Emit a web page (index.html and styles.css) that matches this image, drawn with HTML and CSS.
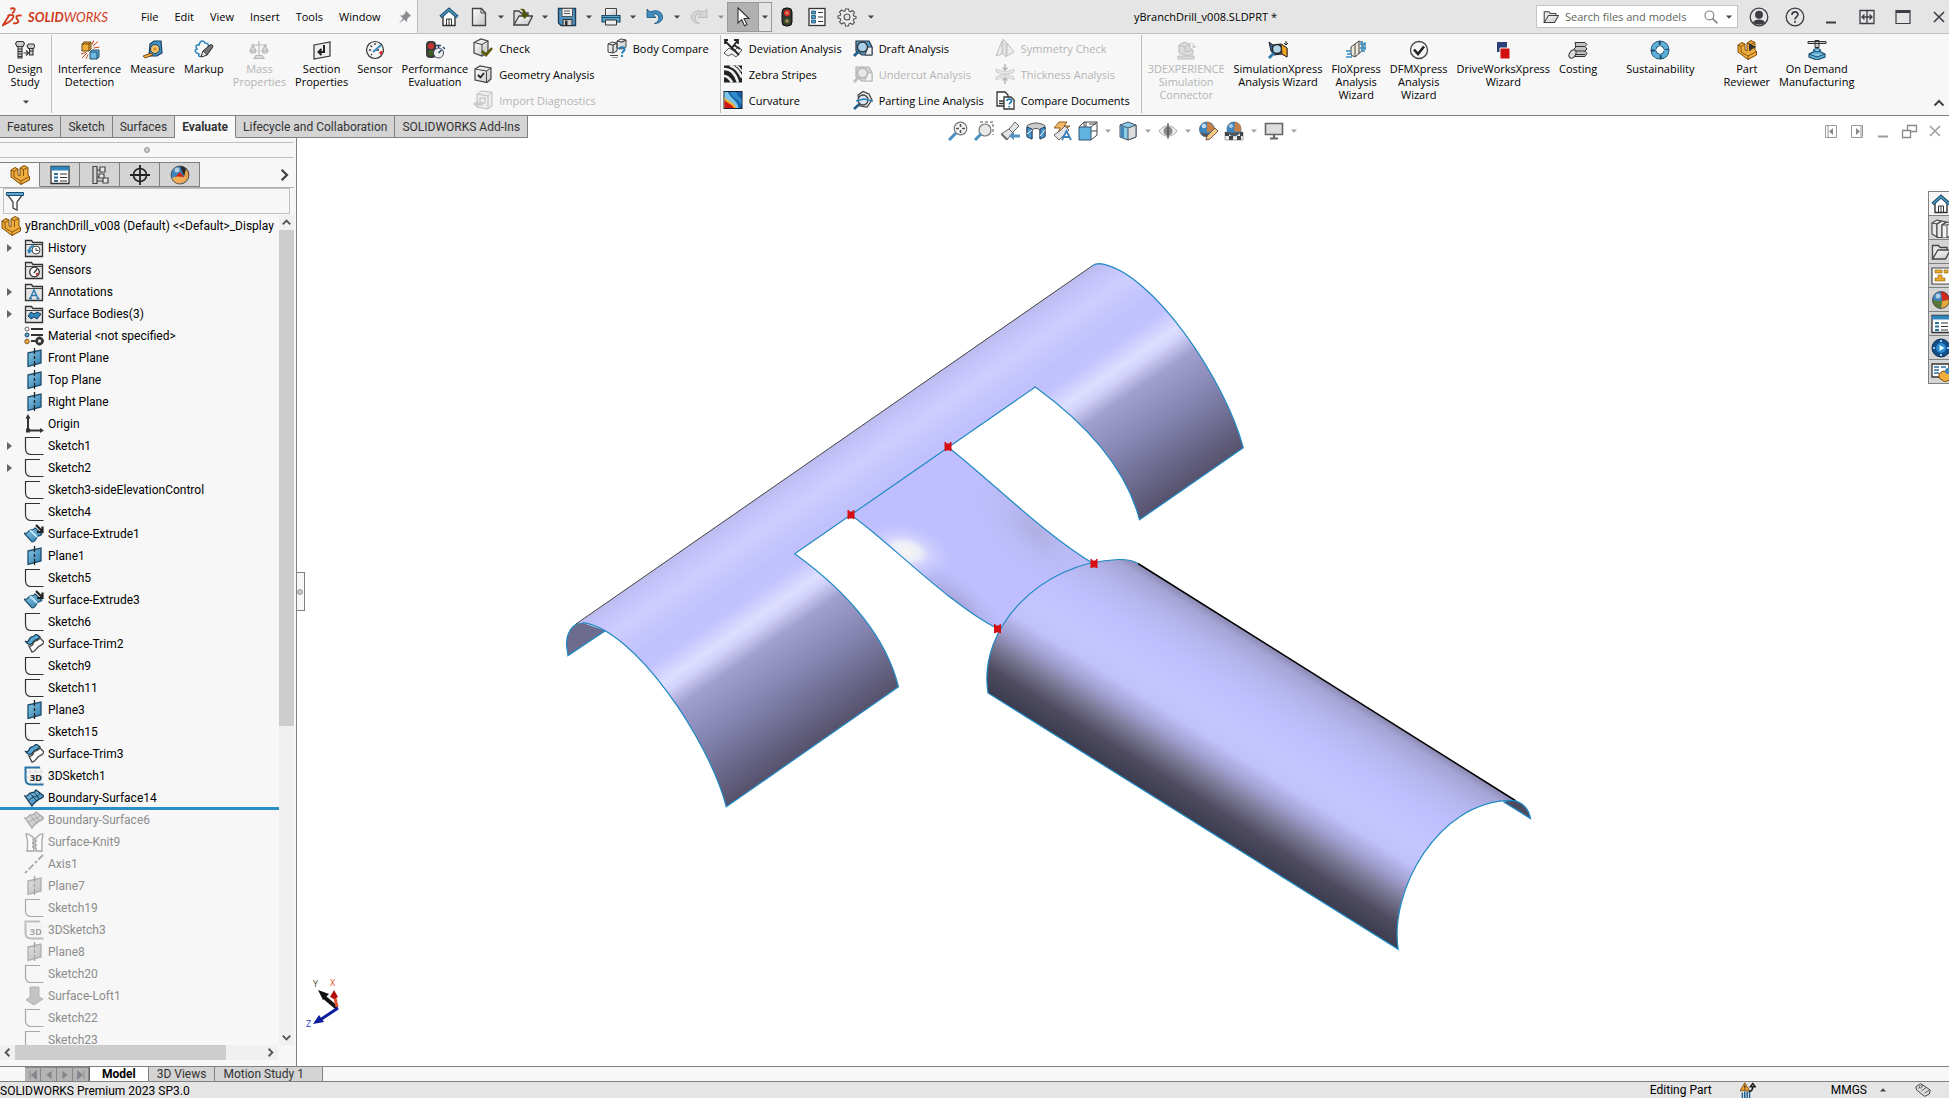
FILE: index.html
```html
<!DOCTYPE html>
<html lang="en">
  <head>
    <meta charset="UTF-8" />
    <meta name="viewport" content="width=device-width, initial-scale=1.0" />
    <title>yBranchDrill_v008.SLDPRT</title>
    <link rel="stylesheet" href="styles.css">
  </head>

  <body>
    <!-- icon sprite -->
    <svg class="sprite" aria-hidden="true">
      <defs>
        <linearGradient id="g-blue" x1="0" y1="0" x2="1" y2="1"><stop offset="0" stop-color="#8cc8e8"/><stop offset="1" stop-color="#2b7cab"/></linearGradient>
        <linearGradient id="g-grey" x1="0" y1="0" x2="1" y2="1"><stop offset="0" stop-color="#fff"/><stop offset="1" stop-color="#c4c4c4"/></linearGradient>
      </defs>
      <symbol id="caret" viewBox="0 0 8 8"><path d="M1 2.500h6L4 5.800z" fill="#444"/></symbol>
      <symbol id="pin" viewBox="0 0 20 20"><path d="M11 2l7 7-2.500.5-3 3.500.2 3.500L9 13 2.500 18 7.500 11.500 3.500 8l3.500.2 3.500-3.200z" fill="#8a8d91"/></symbol>
      <symbol id="home" viewBox="0 0 20 20"><path d="M4 9v9.500h12V9l-6-5.500z" fill="#fff" stroke="#333" stroke-width="1.400"/><path d="M7.500 18v-6h5v6M10 12v6" fill="none" stroke="#333"/><path d="M1.500 10L10 2.500 18.500 10" fill="none" stroke="#1d4e6e" stroke-width="3.400"/><path d="M2 9.800L10 2.800l8 7" fill="none" stroke="#4d9dc8" stroke-width="1.400"/></symbol>
      <symbol id="new" viewBox="0 0 20 20"><path d="M3.500 1.500h9l4 4.500v12.500h-13z" fill="url(#g-grey)" stroke="#444" stroke-width="1.300"/><path d="M12 1.500V6h4.500" fill="none" stroke="#444"/></symbol>
      <symbol id="open" viewBox="0 0 20 20"><path d="M1 18V4h5l2 2h7v3" fill="#ddd" stroke="#444" stroke-width="1.300"/><path d="M1 18L6 9h13.500L15 18z" fill="url(#g-grey)" stroke="#444" stroke-width="1.300"/><path d="M7 2c4-1 6 1 6 5h2.500L11.500 12 8 7h2.500c0-2-1-4-3.500-5z" fill="#505400"/></symbol>
      <symbol id="folder" viewBox="0 0 20 20"><path d="M1.500 17V3.500h6l1.500 2h7V8" fill="#e8e8e8" stroke="#444" stroke-width="1.300"/><path d="M1.500 17L7 8h12.500L14.500 17z" fill="url(#g-grey)" stroke="#444" stroke-width="1.300"/></symbol>
      <symbol id="save" viewBox="0 0 20 20"><path d="M1.500 1.500h17v17H4l-2.500-2.500z" fill="#4d93c0" stroke="#1d3f5c" stroke-width="1.400"/><path d="M5 1.500h10.500v8H5z" fill="#eee" stroke="#555"/><path d="M7 4h6M7 6.500h6" stroke="#555"/><path d="M6 12.500h9v6H6z" fill="#ccc" stroke="#333"/><path d="M8 13.500h2.500V18H8z" fill="#333"/></symbol>
      <symbol id="print" viewBox="0 0 20 20"><path d="M4.500 9V1.500h11V9z" fill="url(#g-grey)" stroke="#444"/><path d="M1 8.500h18v6.500H1z" fill="#5ba5cc" stroke="#1f4f70" stroke-width="1.200"/><path d="M1 10.500h18" stroke="#1f4f70"/><path d="M4.500 13h11v5h-11z" fill="#eee" stroke="#333"/></symbol>
      <symbol id="undo" viewBox="0 0 20 20"><path d="M2 2v8.500h9L7.800 7.500c3-1.500 6 .5 6 3.500 0 2.500-1.500 4.500-4.300 5.500C15 16.500 18 13 17.500 9.500 17 4.500 11 2 5 5z" fill="#3f8fc0" stroke="#1d4e72" stroke-width=".8"/></symbol>
      <symbol id="redo" viewBox="0 0 20 20"><path d="M18 2v8.500H9l3.200-3c-3-1.500-6 .5-6 3.500 0 2.500 1.500 4.500 4.300 5.500C5 16.500 2 13 2.500 9.500 3 4.500 9 2 15 5z" fill="#d5d5d5" stroke="#b4b4b4" stroke-width=".8"/></symbol>
      <symbol id="cursor" viewBox="0 0 20 20"><path d="M5 1l11 10.500h-5l3 6-2.500 1.200-2.800-6L5 16z" fill="#fff" stroke="#333" stroke-width="1.100"/></symbol>
      <symbol id="traffic" viewBox="0 0 20 20"><rect x="5" y="1" width="10" height="18" rx="4" fill="#333" stroke="#111"/><circle cx="10" cy="6" r="3.200" fill="#c92a1c"/><circle cx="10" cy="14" r="3.200" fill="#39501f"/><path d="M10 4v4M8 6h4M10 12v4M8 14h4" stroke="#f3b0a0" stroke-width=".7"/></symbol>
      <symbol id="options" viewBox="0 0 20 20"><rect x="2" y="1.500" width="16" height="17" fill="#fff" stroke="#333" stroke-width="1.300"/><path d="M4.500 4h4v3h-4zM4.500 8.500h4v3h-4zM4.500 13h4v3h-4z" fill="#4a9cc8" stroke="#1d4e6e" stroke-width=".8"/><path d="M11 5.500h5M11 10h5M11 14.500h5" stroke="#333" stroke-width="1.200"/></symbol>
      <symbol id="gear" viewBox="0 0 20 20"><path d="M8.500 2h3l.5 2.200 1.500.6 2-1.300 2 2-1.300 2 .6 1.500 2.200.5v2l-2.200.5-.6 1.500 1.300 2-2 2-2-1.300-1.500.6-.5 2.200h-3L8 16.300l-1.500-.6-2 1.300-2-2 1.300-2-.6-1.500L1 11V9l2.200-.5.6-1.500-1.300-2 2-2 2 1.300L8 4.200z" fill="#eee" stroke="#555" stroke-width="1.100"/><circle cx="10" cy="10" r="3" fill="#e5e5e5" stroke="#555" stroke-width="1.100"/></symbol>
      <symbol id="search" viewBox="0 0 20 20"><circle cx="8" cy="8" r="5.500" fill="none" stroke="#888" stroke-width="1.500"/><path d="M12 12l6 6" stroke="#888" stroke-width="2.200"/></symbol>
      <symbol id="user" viewBox="0 0 20 20"><circle cx="10" cy="10" r="8.800" fill="none" stroke="#3d3d46" stroke-width="1.300"/><circle cx="10" cy="7.800" r="4" fill="#3d3d46"/><path d="M4 15.500c1-4 11-4 12 0-2.500 3-9.500 3-12 0z" fill="#3d3d46"/></symbol>
      <symbol id="help" viewBox="0 0 20 20"><circle cx="10" cy="10" r="8.800" fill="none" stroke="#3d3d46" stroke-width="1.300"/><path d="M7 8c0-4 6-4 6-.5 0 2-3 2.300-3 5M10 14v1.800" fill="none" stroke="#3d3d46" stroke-width="1.700"/></symbol>
      <symbol id="min" viewBox="0 0 20 20"><path d="M5 15.500h10" stroke="#3d3d46" stroke-width="2"/></symbol>
      <symbol id="span" viewBox="0 0 20 20"><path d="M3 3.500h14v13H3zM10 3v14M5 10h10M7.500 7.500L5 10l2.500 2.500M12.500 7.500L15 10l-2.500 2.500" fill="none" stroke="#3d3d46" stroke-width="1.300"/></symbol>
      <symbol id="max" viewBox="0 0 20 20"><path d="M3 3.500h14v13H3z" fill="none" stroke="#3d3d46" stroke-width="1.200"/><path d="M3 4.500h14" stroke="#3d3d46" stroke-width="3"/></symbol>
      <symbol id="close" viewBox="0 0 20 20"><path d="M5 5l10 10M15 5L5 15" stroke="#3d3d46" stroke-width="1.600"/></symbol>
      <symbol id="bolts" viewBox="0 0 20 20"><path d="M.5 3.500L2 1.500h6l1.500 2L8 6.500H2zM3 6.500h4V18H3zM12 6l1.500-2h5L20 6l-1.500 2.500h-5zM14.500 8.500h3.500V15h-3.500z" fill="#ccc" stroke="#333" stroke-width="1.100"/><path d="M3 9h4M3 11.500h4M3 14h4M3 16.500h4M8.500 13h5M11 10.500l2.500 2.500-2.500 2.500M14.500 11h3.500" fill="none" stroke="#333" stroke-width="1.200"/></symbol>
      <symbol id="interference" viewBox="0 0 20 20"><path d="M2 4l2-2h7v7l-2 2H2z" fill="#f0b040" stroke="#6b430a"/><path d="M2 4h7v7M9 4l2-2" fill="none" stroke="#6b430a"/><path d="M10 12l2-2h7v7l-2 2h-7z" fill="#6db8dc" stroke="#1d4e6e"/><path d="M10 12h7v7" fill="none" stroke="#1d4e6e"/><path d="M13 6l5-4.500M13.500 8l6-1M12.500 4.500l1-4M7 13l-5 5M8 14.500L6 19M6 12.500L1 14" stroke="#d2451e"/></symbol>
      <symbol id="measure" viewBox="0 0 20 20"><path d="M7 4l4-3h7l1 12-5 3H6z" fill="#3f93c4" stroke="#1d4060" stroke-width="1.200"/><circle cx="12" cy="9" r="4.500" fill="#f4c168" stroke="#1d4060"/><circle cx="12" cy="9" r="1.600" fill="#d88a20"/><path d="M0 16l8-3 2 2-8 3z" fill="#f0a840" stroke="#553608" stroke-width=".8"/></symbol>
      <symbol id="markup" viewBox="0 0 20 20"><path d="M9 15c-3 2-5 2-4-1-4-1-5-4-2-5-2-3 0-5 2-4 1-5 5-5 6-2 3 0 4 2 3 4" fill="none" stroke="#2e86bd" stroke-width="1.500"/><path d="M7 17l2-6 7-6c2-1 3.500.5 2.500 2.500L13 15z" fill="#777" stroke="#222"/><path d="M7 17l2-6 4 4z" fill="#eee" stroke="#333" stroke-width=".8"/></symbol>
      <symbol id="scale" viewBox="0 0 20 20"><path d="M10 1v15M2 5h16M4 5l-3 6h6zM16 5l-3 6h6zM5 18.500h10l-2-3H7zM1 11c1 3 5 3 6 0M13 11c1 3 5 3 6 0" fill="#aaa" stroke="#444" stroke-width="1.200"/></symbol>
      <symbol id="section" viewBox="0 0 20 20"><path d="M2 5l16-3v14L2 19z" fill="#eee" stroke="#333" stroke-width="1.200"/><path d="M12 5v7H8M9.500 9L6.500 12l3 3" fill="none" stroke="#222" stroke-width="2"/></symbol>
      <symbol id="sensor" viewBox="0 0 20 20"><circle cx="10" cy="10" r="8.500" fill="#f4f4f4" stroke="#333" stroke-width="1.200"/><path d="M10 3v2M4 10h2M5.500 5.500L7 7M6 15l1-1M10 10h4" stroke="#333" stroke-width="1.300"/><path d="M14 12l4-1.500-2 5z" fill="#d22"/><path d="M8 12l8-7" stroke="#3a8fc4" stroke-width="2"/></symbol>
      <symbol id="perf" viewBox="0 0 20 20"><rect x="1" y="1" width="10" height="17" rx="4" fill="#3b3b3b"/><circle cx="6" cy="6" r="3" fill="#c33"/><circle cx="6" cy="13" r="3" fill="#3d5a24"/><circle cx="13.500" cy="13" r="5" fill="#eee" stroke="#446"/><path d="M13.500 13l3-3M13.500 8V5.500M11 5.500h5M18 7l2 2" stroke="#246" stroke-width="1.500"/></symbol>
      <symbol id="check" viewBox="0 0 20 20"><path d="M1 4.500L8 1l7 2v11l-6 4-8-3z" fill="url(#g-grey)" stroke="#444" stroke-width="1.200"/><path d="M1 4.500l8 2 6-3.500M9 6.500V18" fill="none" stroke="#444"/><path d="M9 13l4 4 6-7" fill="none" stroke="#5c5a08" stroke-width="2.600"/></symbol>
      <symbol id="geom" viewBox="0 0 20 20"><path d="M2 5l5-3 11 2v11l-4 3.500L2 16z" fill="url(#g-grey)" stroke="#444" stroke-width="1.200"/><path d="M2 5l11.500 2L18 4M13.500 7v11" fill="none" stroke="#444"/><path d="M5 11l2.500 2.500L11 9" fill="none" stroke="#222" stroke-width="1.800"/></symbol>
      <symbol id="import" viewBox="0 0 20 20"><path d="M4 4l4-3 11 1v14l-4 3-11-2z" fill="#ddd" stroke="#555"/><path d="M4 4l11 2 4-4M15 6v13M7 8h5v5H7z" fill="none" stroke="#555"/><path d="M0 14l5-4v2.500h5v3H5V18z" fill="#777"/></symbol>
      <symbol id="compare" viewBox="0 0 20 20"><path d="M1 6l4-2 5 1v8l-4 2-5-1zM10 3l4-2 5 1v7l-4 2-5-1z" fill="url(#g-grey)" stroke="#444"/><path d="M1 6l5 1 4-2M6 7v8M10 3l5 1 4-2M3 17.500h8M5 20h6" fill="none" stroke="#444" stroke-width="1.200"/><path d="M12.500 11.500c0-3 5-3 5 0 0 2-2.500 2-2.500 4M15 17v2" fill="none" stroke="#257eb5" stroke-width="2"/></symbol>
      <symbol id="deviation" viewBox="0 0 20 20"><path d="M1 15l5-5 5 3 4-4 4 3-6 7-4-3-4 2z" fill="#f2f2f2" stroke="#555"/><path d="M2 3l14 14M8 11L15 2M5 2H2v4M11 2h4v4M17 11l-6-4" fill="none" stroke="#222" stroke-width="1.800"/></symbol>
      <symbol id="zebra" viewBox="0 0 20 20"><rect x="1" y="1.500" width="18" height="17" fill="#222"/><path d="M1 5c8 0 12 6 14 13.500M7 1.500c7 2 9 7 12 12M1 12c4 0 6 3 8 6.500" fill="none" stroke="#eee" stroke-width="2.600"/><path d="M13 1.500c3 1 4 3 6 6" fill="none" stroke="#eee" stroke-width="1.800"/></symbol>
      <symbol id="curvature" viewBox="0 0 20 20"><rect x="1" y="1.500" width="18" height="17" fill="#1a62a8" stroke="#123"/><path d="M1.500 2v16h14C15 11 8 9 5 2z" fill="#7cc6ea"/><path d="M1.500 7v11H13c-1-6-8-6-11.500-11z" fill="#f0b030"/><path d="M1.500 10v8H11c-2-4-6-4-9.500-8z" fill="#d31414"/><path d="M7 2c2 6 8 6 11.500 13V9C16 7 14 5 13 2z" fill="#2f8ccc"/></symbol>
      <symbol id="draft" viewBox="0 0 20 20"><path d="M3 3h13l3 6v8H9L3 13z" fill="#5aa3cf" stroke="#234" stroke-width="1.200"/><path d="M15 9h4v8h-7z" fill="#eee" stroke="#345"/><circle cx="9.500" cy="9" r="5" fill="#bcdcef" fill-opacity=".8" stroke="#333" stroke-width="1.300"/><path d="M6 13l-5 5" stroke="#235f8a" stroke-width="2.800"/></symbol>
      <symbol id="parting" viewBox="0 0 20 20"><path d="M5 5l5-3.500L16 4l3 6-5 7-7-1z" fill="#e2e2e2" stroke="#444" stroke-width="1.200"/><circle cx="10" cy="10" r="5" fill="#d3e6f2" fill-opacity=".8" stroke="#444" stroke-width="1.300"/><path d="M3 11l8-2 9 2" fill="none" stroke="#2b86bd" stroke-width="1.600"/><path d="M6.500 14L1 19" stroke="#235f8a" stroke-width="2.600"/></symbol>
      <symbol id="symmetry" viewBox="0 0 20 20"><path d="M1 18L7 3v13zM8 16V1l3 3v15zM12 5l7 9-7 4z" fill="#ddd" stroke="#555"/></symbol>
      <symbol id="thickness" viewBox="0 0 20 20"><path d="M1 5c6 3 12 3 18 0v3c-6 3-12 3-18 0zM1 13c6-3 12-3 18 0v3c-6-3-12-3-18 0z" fill="#ccc" stroke="#666" stroke-width=".8"/><path d="M10 0v6M7.500 3.500L10 6l2.500-2.500M10 20v-6M7.500 16.500L10 14l2.500 2.500" fill="none" stroke="#333" stroke-width="1.400"/></symbol>
      <symbol id="comparedoc" viewBox="0 0 20 20"><path d="M2 2h8l3 3v11H2z" fill="#fff" stroke="#333" stroke-width="1.300"/><path d="M9 7h7l3 3v9H9z" fill="#fff" stroke="#333" stroke-width="1.300"/><path d="M4 11h5M4 13.500h5" stroke="#333" stroke-width="1.600"/><path d="M12 11c0-2.500 4.500-2.500 4.500 0 0 1.800-2.200 1.800-2.200 3.500M14.300 16v1.500" fill="none" stroke="#257eb5" stroke-width="1.800"/></symbol>
      <symbol id="cloudsim" viewBox="0 0 20 20"><path d="M2 16h16v3H2zM3 5l5-3 6 2v4l3 2v4l-6 2-8-3z" fill="#aaa" stroke="#555"/><path d="M3 5l6 2 5-3M9 7v5l8-2M15 3c2 0 3 2 3 4M16 6l2 2 2-2" fill="none" stroke="#555"/></symbol>
      <symbol id="simx" viewBox="0 0 20 20"><path d="M1 2l4 3 8-1 6 4v9l-5-3-8 1-3-4z" fill="#3b5f96" stroke="#222"/><path d="M13 4l6 4v9l-5-3z" fill="#f2a521" stroke="#432"/><circle cx="9" cy="9" r="4.500" fill="#b4d4e8" stroke="#222" stroke-width="1.300"/><path d="M6 13l-5 5" stroke="#2978ab" stroke-width="2.800"/><path d="M18 1v4M16 3l2 2 2-2" stroke="#222" fill="none"/></symbol>
      <symbol id="flo" viewBox="0 0 20 20"><path d="M5 7l8-6 4 2v7l-8 7-4-2z" fill="#eee8da" stroke="#444"/><path d="M9 4v12M13 2v12" stroke="#444"/><path d="M0 11h5M1 14h5M0 17h6M14 4h6M14 8h6M15 11h4M16 1v11M19 2v8" stroke="#3a8fc4" stroke-width="1.400"/></symbol>
      <symbol id="dfm" viewBox="0 0 20 20"><circle cx="10" cy="10" r="8.500" fill="#f5f5f5" stroke="#444" stroke-width="1.300"/><path d="M5 9.500l4 4.500 6-7.500" fill="none" stroke="#222" stroke-width="2.600"/></symbol>
      <symbol id="driveworks" viewBox="0 0 20 20"><path d="M4 2h10v10H4z" fill="#2b3f78"/><path d="M7 8h10v11H7z" fill="#d20f0f" stroke="#f7f7f7"/></symbol>
      <symbol id="costing" viewBox="0 0 20 20"><path d="M7 2.500h10l2 2-2 2 2 2.500-2 2 2 2.500-2 3H6l-1-3 2-2-1-2.500 2-2z" fill="#c2c2c2" stroke="#333"/><path d="M7 6.500h10M7 11h10M6 14.500h11" stroke="#333"/><ellipse cx="4.500" cy="14" rx="3" ry="4.500" transform="rotate(30 4.500 14)" fill="#ddd" stroke="#333"/></symbol>
      <symbol id="sustain" viewBox="0 0 20 20"><circle cx="10" cy="10" r="6.500" fill="none" stroke="#1d4e6e" stroke-width="6"/><circle cx="10" cy="10" r="6.500" fill="none" stroke="#5fb0d9" stroke-width="4.200" stroke-dasharray="8.200 2"/><path d="M10 5l1.500 3.500L15 10l-3.500 1.500L10 15l-1.500-3.500L5 10l3.500-1.500z" fill="#fff"/></symbol>
      <symbol id="part" viewBox="0 0 20 20"><path d="M1 5l4-2.500L8 4v6l2 1V3l4-2.500L18 2.500v7.500l1.500 1.500V15L11 19.500 1 12z" fill="#f0ac3c" stroke="#7c4c0a"/><path d="M1 5l3 1.500 4-2.500M4 6.500v5.500l7 4 8.500-4.500M11 16v3.500M10 3l3.500 1.500L18 2.500M13.500 4.500V11" fill="none" stroke="#7c4c0a" stroke-width=".9"/></symbol>
      <symbol id="review" viewBox="0 0 20 20"><use href="#part"/><path d="M12 3l7 4-7 4z" fill="#333"/></symbol>
      <symbol id="demand" viewBox="0 0 20 20"><path d="M1 1.500h18v2H1zM8 .5h4v7H8z" fill="#ccc" stroke="#333"/><path d="M10 7v4" stroke="#222" stroke-width="2"/><path d="M2 14l8-4 8 4v3l-8 3-8-3z" fill="#5fb0d9" stroke="#1d4e6e" stroke-width="1.200"/><path d="M2 14l8 3 8-3M6 10l4-2 4 2-4 2z" fill="#85c8e8" stroke="#1d4e6e"/></symbol>

      <!-- heads-up view toolbar -->
      <symbol id="zoomfit" viewBox="0 0 20 20"><circle cx="12.500" cy="7.500" r="6.300" fill="#f4f4f4" stroke="#777" stroke-width="1.200"/><path d="M12.500 3v3M12.500 9v3M8 7.500h3M14 7.500h3" stroke="#555" stroke-width="1.600"/><path d="M8 12l-7 7" stroke="#4c8fc0" stroke-width="3"/></symbol>
      <symbol id="zoomarea" viewBox="0 0 20 20"><path d="M6 1h13v13" fill="none" stroke="#555" stroke-dasharray="3 2"/><circle cx="11" cy="9" r="6" fill="#e8e8e8" stroke="#777" stroke-width="1.200"/><path d="M7 13l-6 6" stroke="#4c8fc0" stroke-width="3"/></symbol>
      <symbol id="prevview" viewBox="0 0 20 20"><path d="M1 13l8-5 6-7 4 4-6 6-6 8z" fill="#e4e4e4" stroke="#666"/><path d="M9 8l4 4" stroke="#666"/><path d="M1.500 13l5.500 5.500" stroke="#666" stroke-width="2"/><path d="M9 15l5-4v2.500h6v3h-6V19z" fill="#5295c4"/></symbol>
      <symbol id="sectionview" viewBox="0 0 20 20"><path d="M1 5c4-4 14-4 18 0v10l-5 3V9c-2-2-6-2-8 0v9l-5-3z" fill="#ccc" stroke="#555"/><path d="M1 6l5 2v10l-5-2zM14 8l5-2v10l-5 2z" fill="#4a97cb" stroke="#246"/><path d="M1 13l5-4M14 15l5-6" stroke="#fff"/></symbol>
      <symbol id="annview" viewBox="0 0 20 20"><path d="M7 1h8l-3 4h6L6 12l2-5H2z" fill="#f3b765" stroke="#8b5f22"/><path d="M2 14l7-5 4-4 4 4-5 5-5 5z" fill="#e4e4e4" stroke="#666"/><path d="M10 19l4.500-9L19 19M12 16h5" fill="none" stroke="#3d82bb" stroke-width="1.800"/></symbol>
      <symbol id="orient" viewBox="0 0 20 20"><path d="M1 6h12v13H1z" fill="#5fb3dc" stroke="#357"/><path d="M1 6l5-5h13v13l-6 5M13 6l6-5M6 1v5M8 1v5M13 10h6M11 3h7" fill="none" stroke="#444"/></symbol>
      <symbol id="display" viewBox="0 0 20 20"><path d="M2 4l8-3 8 3v12l-8 3-8-3z" fill="#8ccbe8" stroke="#456"/><path d="M10 7l8-3v12l-8 3z" fill="#ddd" stroke="#456"/><path d="M2 4l8 3" stroke="#456"/><path d="M3 5l3 1v11l-3-1z" fill="#4089b8"/></symbol>
      <symbol id="eye" viewBox="0 0 20 20"><path d="M1 10c5-7 13-7 18 0-5 7-13 7-18 0z" fill="#eee" stroke="#aaa"/><circle cx="10" cy="10" r="4.500" fill="#8a8a8a"/><path d="M10 2v16" stroke="#333"/></symbol>
      <symbol id="ball" viewBox="0 0 20 20"><circle cx="10" cy="10" r="8.500" fill="#3d86c0"/><path d="M10 1.500a8.500 8.500 0 0 1 8.500 8.500L11 11z" fill="#d02a1d"/><path d="M18.500 10a8.500 8.500 0 0 1-8.500 8.500l1-7.500z" fill="#e6a73b"/><path d="M10 18.500A8.500 8.500 0 0 1 1.500 10l9.500 1z" fill="#577a39"/><circle cx="7" cy="6" r="2.500" fill="#fff" opacity=".6"/><circle cx="10" cy="10" r="8.500" fill="none" stroke="#333" stroke-width=".7"/></symbol>
      <symbol id="dispball" viewBox="0 0 20 20"><circle cx="10" cy="10" r="9" fill="#3d86c0"/><path d="M10 1c3 0 9 3 9 9l-2 4-4-5z" fill="#2c2c2c"/><path d="M16 4c5 5 3 12-3 14l1-6z" fill="#e8a24c"/><path d="M5 12l5-5 4 5z" fill="#cc2417"/><path d="M2 13c4-2 9-2 14 0-3 8-12 8-14 0z" fill="#efae5c"/><circle cx="7" cy="5" r="2.500" fill="#fff" opacity=".6"/><circle cx="10" cy="10" r="9" fill="none" stroke="#333" stroke-width=".7"/></symbol>
      <symbol id="appear" viewBox="0 0 20 20"><circle cx="9" cy="8.500" r="7.500" fill="#3d86c0" stroke="#357" stroke-width=".7"/><path d="M9 1a7.500 7.500 0 0 1 7 9l-7 1z" fill="#c87f43"/><path d="M2 11c5 2 9 2 13 0-2 6-11 6-13 0z" fill="#555"/><circle cx="6" cy="5" r="2.300" fill="#fff" opacity=".7"/><path d="M8 19l1-4 8-8 3 3-8 8z" fill="#f0c987" stroke="#754"/></symbol>
      <symbol id="scene" viewBox="0 0 20 20"><path d="M1 11h18v8H1z" fill="#eee" stroke="#777" stroke-width=".6"/><path d="M1 11h4v4H1zM5 15h4v4H5zM13 15h4v4h-4zM16 11h3v4h-3z" fill="#444"/><circle cx="10" cy="8" r="7" fill="#3d86c0" stroke="#357" stroke-width=".7"/><path d="M11 1c6 1 7 6 5 10l-6-1z" fill="#c87f43"/><path d="M4 11c5 1 8 1 12 0-3 5-9 5-12 0z" fill="#555"/><circle cx="7" cy="5" r="2" fill="#fff" opacity=".6"/></symbol>
      <symbol id="monitor" viewBox="0 0 20 20"><path d="M1.500 2.500h17v11h-17z" fill="#ddd" stroke="#666" stroke-width="1.600"/><path d="M10 14v3M6 17.500h8" stroke="#666" stroke-width="2.200"/></symbol>
      <symbol id="paneleft" viewBox="0 0 20 20"><path d="M4.500 4.500h11v12h-11z" fill="none" stroke="#999"/><path d="M7 4v12" stroke="#999"/><path d="M12 7v7l-4-3.500z" fill="#888"/></symbol>
      <symbol id="paneright" viewBox="0 0 20 20"><path d="M4.500 4.500h11v12h-11z" fill="none" stroke="#999"/><path d="M14 4v12" stroke="#999"/><path d="M9 7v7l4-3.500z" fill="#888"/></symbol>
      <symbol id="cascade" viewBox="0 0 20 20"><path d="M3.500 9.500h8v7h-8zM8.500 9V4.500h9v6H12" fill="none" stroke="#888" stroke-width="1.300"/></symbol>

      <!-- feature tree -->
      <symbol id="t-box" viewBox="0 0 20 20"><path d="M1.500 18.500V2.500h6l1.500 2h9.500v14z" fill="#e4e4e4" stroke="#333" stroke-width="1.300"/><path d="M1.500 6.500h17" stroke="#444"/></symbol>
      <symbol id="t-history" viewBox="0 0 20 20"><use href="#t-box"/><circle cx="12" cy="12" r="4" fill="#fff" stroke="#444"/><path d="M12 10v2.500h2.500" fill="none" stroke="#444"/><path d="M5 15c0-5 2-7 5-7" fill="none" stroke="#2f86bd" stroke-width="2.200"/><path d="M3 12h6l-4 4z" fill="#2f86bd"/></symbol>
      <symbol id="t-sensors" viewBox="0 0 20 20"><use href="#t-box"/><circle cx="10.500" cy="12" r="4.800" fill="#fff" stroke="#333" stroke-width="1.300"/><path d="M10 13l3-4" stroke="#333" stroke-width="1.300"/><path d="M12 13h3l-3 3z" fill="#d22"/></symbol>
      <symbol id="t-ann" viewBox="0 0 20 20"><use href="#t-box"/><path d="M6 16.500l4-8.500 4 8.500M7.500 13.500h5M5 16.500h3M12.500 16.500h3" fill="none" stroke="#2878b0" stroke-width="1.400"/></symbol>
      <symbol id="t-bodies" viewBox="0 0 20 20"><use href="#t-box"/><path d="M4 12l3-4 3 2 3-2 4 2-4 5-3-2-3 2z" fill="#2f86bd" stroke="#153c58"/></symbol>
      <symbol id="t-material" viewBox="0 0 20 20"><circle cx="3" cy="3" r="2" fill="#fff" stroke="#666"/><circle cx="3" cy="9" r="2" fill="#5aa8d4" stroke="#246"/><circle cx="3" cy="15.500" r="2.300" fill="#f0a030" stroke="#864"/><path d="M7 3h12M7 9h12M7 15h4" stroke="#333" stroke-width="2"/><circle cx="15.500" cy="15" r="3" fill="none" stroke="#333" stroke-width="2.600"/><path d="M15.500 10.500v9M11 15h9" stroke="#333" stroke-width="1.600"/><circle cx="15.500" cy="15" r="1.500" fill="#f7f7f7"/></symbol>
      <symbol id="t-plane" viewBox="0 0 20 20"><path d="M4 5l13-3v13L4 18.500z" fill="url(#g-blue)" stroke="#1d4e6e" stroke-width="1.300"/><path d="M10.500 0v20" stroke="#222" stroke-width="1.300" stroke-dasharray="6 2 3 2"/></symbol>
      <symbol id="t-origin" viewBox="0 0 20 20"><path d="M4 3v13.500h13" fill="none" stroke="#333" stroke-width="2"/><path d="M1.500 4.500L4 0l2.500 4.500zM16 14l4 2.500-4 2.500zM2 14.500h4v4H2z" fill="#333"/></symbol>
      <symbol id="t-sketch" viewBox="0 0 20 20"><path d="M16 1.500H1.500v11c0 4 2 6 5.500 6h12.500" fill="none" stroke="#333" stroke-width="1.200"/></symbol>
      <symbol id="t-sketch3d" viewBox="0 0 20 20"><path d="M2 6h18M2 11h18M6 1v17M12 1v17M17 1v17" stroke="#ddd"/><path d="M16 1.500H1.500v11c0 4 2 6 5.500 6h12.500" fill="none" stroke="#2b74a8" stroke-width="2"/><text x="6" y="14.500" class="tiny">3D</text></symbol>
      <symbol id="t-extrude" viewBox="0 0 20 20"><path d="M0 9c3 2 4-2 6-3s3 1 5-2l7 6c-2 3-4 1-5 3s-2 5-5 5z" fill="url(#g-blue)" stroke="#1d4e6e" stroke-width="1.200"/><path d="M6 6l7 7" stroke="#bfe2f4" stroke-width="2"/><path d="M12 1l6 6M18.500 2.500V8H13" fill="none" stroke="#222" stroke-width="2.200"/></symbol>
      <symbol id="t-trim" viewBox="0 0 20 20"><path d="M1 7c3 2 4-1 5-3s4 0 6-4l4 3c-3 4-5 2-6 4s-3 4-6 3z" fill="#5aa8d4" stroke="#1b3f58" stroke-width="1.300"/><path d="M5 12c3 1 4-2 5-4s4 0 6-4l4 4c-2 4-4 3-6 5s-3 5-6 5z" fill="#fff" stroke="#444" stroke-width="1.300"/></symbol>
      <symbol id="t-boundary" viewBox="0 0 20 20"><path d="M1 8c3 1 3-2 5-3s4 1 6-3l8 6c-2 3-4 2-6 4s-3 1-6 6z" fill="url(#g-blue)" stroke="#1b3f58" stroke-width="1.300"/><path d="M4 13c2-1 3-3 5-4s4 1 7-4M6 5c2 2 4 6 7 8M10 4c1 2 4 4 5 7" fill="none" stroke="#1b3f58"/></symbol>
      <symbol id="t-knit" viewBox="0 0 20 20"><path d="M2 2c3-1 5 2 8 4l-1 4 1 9H3c1-5 1-10-1-17zM19 2c-3-1-5 2-7 4l-1 4 1 9h6c0-5-1-10 1-17z" fill="#fff" stroke="#333" stroke-width="1.300"/><path d="M8 7l5 2-5 2 5 2-5 2 5 2" fill="none" stroke="#333"/></symbol>
      <symbol id="t-axis" viewBox="0 0 20 20"><path d="M1 19L19 1" stroke="#333" stroke-width="1.800" stroke-dasharray="3 2 7 2"/></symbol>
      <symbol id="t-loft" viewBox="0 0 20 20"><path d="M6 1h9v10l4 2-9 6-8-5 4-3z" fill="#777" stroke="#555"/></symbol>
      <symbol id="filter" viewBox="0 0 20 20"><path d="M2 3h16l-6 8v8l-4-2v-6z" fill="#fff" stroke="#444" stroke-width="1.300"/><path d="M1.500 1.500h17v3h-17z" fill="#5aa8d4" stroke="#1d4e6e"/></symbol>
      <symbol id="props" viewBox="0 0 20 20"><path d="M1 1.500h18v17H1z" fill="#fff" stroke="#333" stroke-width="1.300"/><path d="M1 1.500h18v4H1z" fill="#2f86bd"/><path d="M4 8h4v2H4zM4 11.500h4v2H4zM4 15h4v2H4z" fill="#2f6f9b"/><path d="M10 9h7M10 12.500h7M10 16h7" stroke="#333"/></symbol>
      <symbol id="config" viewBox="0 0 20 20"><path d="M3 1.500h4v17H3zM7 5h4M7 12h3M7 16h6" fill="none" stroke="#444" stroke-width="1.200"/><path d="M10 2h5v5h-5zM9 9h5v4H9zM13 13h5v5h-5z" fill="#e8e8e8" stroke="#444" stroke-width="1.200"/></symbol>
      <symbol id="target" viewBox="0 0 20 20"><circle cx="10" cy="10" r="6.500" fill="none" stroke="#222" stroke-width="1.600"/><path d="M10 0v20M0 10h20" stroke="#222" stroke-width="1.800"/></symbol>
      <symbol id="library" viewBox="0 0 20 20"><path d="M1 5l5-3 4 1-4 3v13l-5-3z" fill="#e8e8e8" stroke="#444" stroke-width="1.100"/><path d="M6 6l5-3 4 1-4 3v13l-5-1z" fill="#e8e8e8" stroke="#444" stroke-width="1.100"/><path d="M11 7l5-3 4 1v12l-4 3h-5z" fill="#f2f2f2" stroke="#444" stroke-width="1.100"/><path d="M1 5l5 1M11 7h5v13M16 7l4-2" fill="none" stroke="#444"/></symbol>
      <symbol id="palette" viewBox="0 0 20 20"><path d="M1 2h19v16H1z" fill="#fff" stroke="#444" stroke-width="1.200"/><path d="M4 4h7v3H4zM13 4h4v3h-4zM7 9h4v3h3v3H4v-3h3z" fill="#e9aa28" stroke="#8a6010" stroke-width=".6"/></symbol>
      <symbol id="forum" viewBox="0 0 20 20"><circle cx="10" cy="10" r="9" fill="#124f8a" stroke="#0b2b4c"/><circle cx="10" cy="10" r="5" fill="#2e8ad0"/><path d="M8.500 7l5 3-5 3z" fill="#dff"/><path d="M10 2v2M10 16v2M2 10h2M16 10h2" stroke="#9cf" stroke-width="2"/></symbol>
      <symbol id="sheet" viewBox="0 0 20 20"><path d="M1 2h17v13H1z" fill="#fff" stroke="#333" stroke-width="1.300"/><path d="M3 5h5M3 8h5M3 11h5M10 5h5" stroke="#2f6f9b" stroke-width="1.600"/><path d="M8 12l4-3 4 1 4-1v8l-6 3-6-4z" fill="#f0ac3c" stroke="#7c4c0a"/><circle cx="17" cy="9" r="3" fill="#3d86c0"/></symbol>
      <symbol id="warn" viewBox="0 0 20 20"><path d="M2 12h12v8H2z" fill="#fff"/><path d="M3 13v7M6 12v8M9 12v8M12 11v9" stroke="#23608c" stroke-width="2"/><path d="M0 11L6 1l6 10z" fill="#f0a030" stroke="#6b430a"/><path d="M6 4v4M6 9v1" stroke="#222" stroke-width="1.300"/><path d="M11 12c4 0 5-3 5-7M13 6l3-4 3 4z" fill="none" stroke="#222" stroke-width="2"/></symbol>
      <symbol id="tag" viewBox="0 0 20 20"><path d="M1 6l6-4 12 8-1 5-6 3L2 10z" fill="#ddd" stroke="#444" stroke-width="1.200"/><path d="M4 8l6-4M8 11l6-4M12 14l6-4" stroke="#444"/><circle cx="7" cy="6" r="1.500" fill="#fff" stroke="#444"/></symbol>
    </svg>

    <header class="titlebar">
      <div class="menu-zone">
        <a class="brand" href="#">
          <svg class="brand-mark" viewBox="0 0 24 22" fill="none" stroke="#cf3a1c" stroke-width="2"><path d="M9 2c5-1.500 7 .5 2 5M6 10c7-3 8 0 4.500 4C8 17 4 18.500 1 20L8.500 8"/><path d="M21.500 9.500c-5-1-7 1-5 3.800 2.500 3.200 1.500 4.700-4.500 4.700"/></svg>
          <span class="brand-name"><b>SOLID</b>WORKS</span>
        </a>
        <nav class="menus">
          <a href="#">File</a><a href="#">Edit</a><a href="#">View</a><a href="#">Insert</a><a href="#">Tools</a><a href="#">Window</a>
        </nav>
        <button class="tool" aria-label="Pin menu"><svg class="icon-sm"><use href="#pin"/></svg></button>
      </div>
      <div class="quick">
        <button class="tool" aria-label="Home"><svg><use href="#home"/></svg></button>
        <div class="quick-files">
          <button class="tool" aria-label="New"><svg><use href="#new"/></svg></button><button class="drop" aria-label="New options"><svg><use href="#caret"/></svg></button>
          <button class="tool" aria-label="Open"><svg><use href="#open"/></svg></button><button class="drop" aria-label="Open options"><svg><use href="#caret"/></svg></button>
          <button class="tool" aria-label="Save"><svg><use href="#save"/></svg></button><button class="drop" aria-label="Save options"><svg><use href="#caret"/></svg></button>
          <button class="tool" aria-label="Print"><svg><use href="#print"/></svg></button><button class="drop" aria-label="Print options"><svg><use href="#caret"/></svg></button>
          <button class="tool" aria-label="Undo"><svg><use href="#undo"/></svg></button><button class="drop" aria-label="Undo options"><svg><use href="#caret"/></svg></button>
          <button class="tool" aria-label="Redo" disabled><svg><use href="#redo"/></svg></button><button class="drop faded" aria-label="Redo options"><svg><use href="#caret"/></svg></button>
        </div>
        <div class="select-tool">
          <button class="select-main" aria-label="Select"><svg><use href="#cursor"/></svg></button><button class="select-drop" aria-label="Select options"><svg><use href="#caret"/></svg></button>
        </div>
        <div class="quick-last">
          <button class="tool" aria-label="Rebuild"><svg><use href="#traffic"/></svg></button>
          <button class="tool" aria-label="File properties"><svg><use href="#options"/></svg></button>
          <button class="tool" aria-label="Options"><svg><use href="#gear"/></svg></button>
          <button class="drop" aria-label="More options"><svg><use href="#caret"/></svg></button>
        </div>
      </div>
      <h1 class="doc-title">yBranchDrill_v008.SLDPRT *</h1>
      <div class="title-right">
        <div class="search">
          <svg class="icon-sm"><use href="#folder"/></svg>
          <input type="text" aria-label="Search files and models" placeholder="Search files and models" />
          <svg class="icon-sm"><use href="#search"/></svg>
          <button class="drop" aria-label="Search options"><svg><use href="#caret"/></svg></button>
        </div>
        <button class="tool" aria-label="Account"><svg><use href="#user"/></svg></button>
        <button class="tool" aria-label="Help"><svg><use href="#help"/></svg></button>
        <button class="tool" aria-label="Minimize"><svg><use href="#min"/></svg></button>
        <button class="tool" aria-label="Span displays"><svg><use href="#span"/></svg></button>
        <button class="tool" aria-label="Maximize"><svg><use href="#max"/></svg></button>
        <button class="tool" aria-label="Close"><svg><use href="#close"/></svg></button>
      </div>
    </header>

    <section class="ribbon">
      <div class="group study">
        <button class="big"><svg><use href="#bolts"/></svg><span>Design<br>Study</span></button>
        <button class="drop" aria-label="Design study options"><svg><use href="#caret"/></svg></button>
      </div>
      <div class="group">
        <button class="big"><svg><use href="#interference"/></svg><span>Interference<br>Detection</span></button>
        <button class="big"><svg><use href="#measure"/></svg><span>Measure</span></button>
        <button class="big"><svg><use href="#markup"/></svg><span>Markup</span></button>
        <button class="big" disabled><svg><use href="#scale"/></svg><span>Mass<br>Properties</span></button>
        <button class="big"><svg><use href="#section"/></svg><span>Section<br>Properties</span></button>
        <button class="big"><svg><use href="#sensor"/></svg><span>Sensor</span></button>
        <button class="big"><svg><use href="#perf"/></svg><span>Performance<br>Evaluation</span></button>
        <div class="stack">
          <button><svg><use href="#check"/></svg>Check</button>
          <button><svg><use href="#geom"/></svg>Geometry Analysis</button>
          <button disabled><svg><use href="#import"/></svg>Import Diagnostics</button>
        </div>
        <div class="stack">
          <button><svg><use href="#compare"/></svg>Body Compare</button>
        </div>
      </div>
      <div class="group">
        <div class="stack">
          <button><svg><use href="#deviation"/></svg>Deviation Analysis</button>
          <button><svg><use href="#zebra"/></svg>Zebra Stripes</button>
          <button><svg><use href="#curvature"/></svg>Curvature</button>
        </div>
        <div class="stack">
          <button><svg><use href="#draft"/></svg>Draft Analysis</button>
          <button disabled><svg><use href="#draft"/></svg>Undercut Analysis</button>
          <button><svg><use href="#parting"/></svg>Parting Line Analysis</button>
        </div>
        <div class="stack">
          <button disabled><svg><use href="#symmetry"/></svg>Symmetry Check</button>
          <button disabled><svg><use href="#thickness"/></svg>Thickness Analysis</button>
          <button><svg><use href="#comparedoc"/></svg>Compare Documents</button>
        </div>
      </div>
      <div class="group last">
        <button class="big" disabled><svg><use href="#cloudsim"/></svg><span>3DEXPERIENCE<br>Simulation<br>Connector</span></button>
        <button class="big"><svg><use href="#simx"/></svg><span>SimulationXpress<br>Analysis Wizard</span></button>
        <button class="big"><svg><use href="#flo"/></svg><span>FloXpress<br>Analysis<br>Wizard</span></button>
        <button class="big"><svg><use href="#dfm"/></svg><span>DFMXpress<br>Analysis<br>Wizard</span></button>
        <button class="big"><svg><use href="#driveworks"/></svg><span>DriveWorksXpress<br>Wizard</span></button>
        <button class="big"><svg><use href="#costing"/></svg><span>Costing</span></button>
        <button class="big wide"><svg><use href="#sustain"/></svg><span>Sustainability</span></button>
        <button class="big"><svg><use href="#review"/></svg><span>Part<br>Reviewer</span></button>
        <button class="big"><svg><use href="#demand"/></svg><span>On Demand<br>Manufacturing</span></button>
      </div>
      <button class="collapse" aria-label="Collapse ribbon"><svg viewBox="0 0 12 12"><path d="M1.500 8.500L6 4l4.500 4.500" fill="none" stroke="#444" stroke-width="2"/></svg></button>
    </section>

    <main class="workspace">
      <nav class="command-tabs">
        <button>Features</button><button>Sketch</button><button>Surfaces</button><button class="active">Evaluate</button><button>Lifecycle and Collaboration</button><button>SOLIDWORKS Add-Ins</button>
      </nav>

      <aside class="manager">
        <div class="grip"><i></i></div>
        <div class="manager-tabs">
          <button class="active" aria-label="Feature tree"><svg><use href="#part"/></svg></button>
          <button aria-label="Properties"><svg><use href="#props"/></svg></button>
          <button aria-label="Configurations"><svg><use href="#config"/></svg></button>
          <button aria-label="Dimensions"><svg><use href="#target"/></svg></button>
          <button aria-label="Display"><svg><use href="#dispball"/></svg></button>
          <button class="more" aria-label="More tabs"><svg viewBox="0 0 12 12"><path d="M4 1.500L8.500 6 4 10.500" fill="none" stroke="#444" stroke-width="2"/></svg></button>
        </div>
        <label class="filter"><svg><use href="#filter"/></svg><input type="text" aria-label="Filter tree" /></label>
        <div class="tree-wrap">
          <ul class="tree">
            <li class="root"><svg><use href="#part"/></svg>yBranchDrill_v008 (Default) &lt;&lt;Default&gt;_Display</li>
            <li class="open"><svg><use href="#t-history"/></svg>History</li>
            <li><svg><use href="#t-sensors"/></svg>Sensors</li>
            <li class="open"><svg><use href="#t-ann"/></svg>Annotations</li>
            <li class="open"><svg><use href="#t-bodies"/></svg>Surface Bodies(3)</li>
            <li><svg><use href="#t-material"/></svg>Material &lt;not specified&gt;</li>
            <li><svg><use href="#t-plane"/></svg>Front Plane</li>
            <li><svg><use href="#t-plane"/></svg>Top Plane</li>
            <li><svg><use href="#t-plane"/></svg>Right Plane</li>
            <li><svg><use href="#t-origin"/></svg>Origin</li>
            <li class="open"><svg><use href="#t-sketch"/></svg>Sketch1</li>
            <li class="open"><svg><use href="#t-sketch"/></svg>Sketch2</li>
            <li><svg><use href="#t-sketch"/></svg>Sketch3-sideElevationControl</li>
            <li><svg><use href="#t-sketch"/></svg>Sketch4</li>
            <li><svg><use href="#t-extrude"/></svg>Surface-Extrude1</li>
            <li><svg><use href="#t-plane"/></svg>Plane1</li>
            <li><svg><use href="#t-sketch"/></svg>Sketch5</li>
            <li><svg><use href="#t-extrude"/></svg>Surface-Extrude3</li>
            <li><svg><use href="#t-sketch"/></svg>Sketch6</li>
            <li><svg><use href="#t-trim"/></svg>Surface-Trim2</li>
            <li><svg><use href="#t-sketch"/></svg>Sketch9</li>
            <li><svg><use href="#t-sketch"/></svg>Sketch11</li>
            <li><svg><use href="#t-plane"/></svg>Plane3</li>
            <li><svg><use href="#t-sketch"/></svg>Sketch15</li>
            <li><svg><use href="#t-trim"/></svg>Surface-Trim3</li>
            <li><svg><use href="#t-sketch3d"/></svg>3DSketch1</li>
            <li class="rollback"><svg><use href="#t-boundary"/></svg>Boundary-Surface14</li>
            <li class="off"><svg><use href="#t-boundary"/></svg>Boundary-Surface6</li>
            <li class="off"><svg><use href="#t-knit"/></svg>Surface-Knit9</li>
            <li class="off"><svg><use href="#t-axis"/></svg>Axis1</li>
            <li class="off"><svg><use href="#t-plane"/></svg>Plane7</li>
            <li class="off"><svg><use href="#t-sketch"/></svg>Sketch19</li>
            <li class="off"><svg><use href="#t-sketch3d"/></svg>3DSketch3</li>
            <li class="off"><svg><use href="#t-plane"/></svg>Plane8</li>
            <li class="off"><svg><use href="#t-sketch"/></svg>Sketch20</li>
            <li class="off"><svg><use href="#t-loft"/></svg>Surface-Loft1</li>
            <li class="off"><svg><use href="#t-sketch"/></svg>Sketch22</li>
            <li class="off"><svg><use href="#t-sketch"/></svg>Sketch23</li>
          </ul>
          <div class="vscroll">
            <svg viewBox="0 0 16 16"><path d="M4 10l4-4 4 4" fill="none" stroke="#555" stroke-width="2"/></svg>
            <div class="vtrack"><div class="vthumb"></div></div>
            <svg viewBox="0 0 16 16"><path d="M4 6l4 4 4-4" fill="none" stroke="#555" stroke-width="2"/></svg>
          </div>
        </div>
        <div class="hscroll">
          <svg viewBox="0 0 16 16"><path d="M10 4L6 8l4 4" fill="none" stroke="#555" stroke-width="2"/></svg>
          <div class="htrack"><div class="hthumb"></div></div>
          <svg viewBox="0 0 16 16"><path d="M6 4l4 4-4 4" fill="none" stroke="#555" stroke-width="2"/></svg>
        </div>
      </aside>

      <section class="viewport">
        <svg class="model" viewBox="297 116 1652 950" role="img" aria-label="Y branch surface model">
          <defs>
            <linearGradient id="run" gradientUnits="userSpaceOnUse" x1="1092" y1="266" x2="1226" y2="460">
              <stop offset="0" stop-color="#bbbbef"/><stop offset=".05" stop-color="#c4c4fc"/><stop offset=".13" stop-color="#cdcdff"/><stop offset=".26" stop-color="#c0c0fd"/><stop offset=".33" stop-color="#c2c2fe"/><stop offset=".42" stop-color="#dedeff"/><stop offset=".46" stop-color="#d2d1fa"/><stop offset=".54" stop-color="#a19fcd"/><stop offset=".7" stop-color="#8787b4"/><stop offset=".85" stop-color="#6e6c90"/><stop offset="1" stop-color="#56526d"/>
            </linearGradient>
            <linearGradient id="drill" gradientUnits="userSpaceOnUse" x1="1138" y1="563" x2="1037" y2="724">
              <stop offset="0" stop-color="#8a88b0"/><stop offset=".05" stop-color="#a5a4d6"/><stop offset=".15" stop-color="#b4b4ec"/><stop offset=".3" stop-color="#bfbffe"/><stop offset=".48" stop-color="#c5c5ff"/><stop offset=".58" stop-color="#c0c0fb"/><stop offset=".68" stop-color="#a19fcf"/><stop offset=".78" stop-color="#76748f"/><stop offset=".88" stop-color="#4f4c62"/><stop offset="1" stop-color="#3b3b4e"/>
            </linearGradient>
            <radialGradient id="neck-shade" gradientUnits="userSpaceOnUse" cx="0" cy="0" r="1" gradientTransform="translate(1035 530) rotate(42) scale(95 48)">
              <stop offset="0" stop-color="#afafe2"/><stop offset="1" stop-color="#bfbfff" stop-opacity="0"/>
            </radialGradient>
            <radialGradient id="neck-low" gradientUnits="userSpaceOnUse" cx="0" cy="0" r="1" gradientTransform="translate(955 608) rotate(41) scale(80 34)">
              <stop offset="0" stop-color="#9a99c6"/><stop offset="1" stop-color="#bfbfff" stop-opacity="0"/>
            </radialGradient>
            <radialGradient id="shine" gradientUnits="userSpaceOnUse" cx="0" cy="0" r="1" gradientTransform="translate(906 551) rotate(15) scale(48 28)">
              <stop offset="0" stop-color="#f6f6f4"/><stop offset=".3" stop-color="#ececf8"/><stop offset=".5" stop-color="#d6d6fd" stop-opacity=".8"/><stop offset="1" stop-color="#c6c6ff" stop-opacity="0"/>
            </radialGradient>
          </defs>
          <path d="M606 631L568 655.600L566.500 645.700C566 634 572 623 582.600 622.700Z" fill="#6e6c8e"/>
          <path d="M606 630L568 655.600L566.500 645.700C566 634 572 623 582.600 622.700" class="edge"/>
          <path d="M575.700 624.200L1092 266C1094 264.500 1097 263.700 1099.600 263.700C1151.500 270 1226 381 1243.300 447.800L1139.500 519.800C1125.300 464.700 1080.400 419.700 1035.300 387L794.700 553.800C839.800 586.500 884.700 631.500 898.500 686.800L726.300 806.800C709 740 634.500 629 582.600 622.700C580 622.700 577 623.500 575.700 624.200Z" fill="url(#run)"/>
          <path d="M575.700 624.200L1092 266" class="silhouette"/>
          <g>
            <path d="M851 515L948 447C990 480 1045 535 1094 564L1094 600 998 629C945 601 893 545 851 515Z" fill="#bfbfff"/>
            <path d="M851 515L948 447C990 480 1045 535 1094 564L1094 600 998 629C945 601 893 545 851 515Z" fill="url(#neck-shade)"/>
            <path d="M851 515L948 447C990 480 1045 535 1094 564L1094 600 998 629C945 601 893 545 851 515Z" fill="url(#neck-low)"/>
            <path d="M851 515L948 447C990 480 1045 535 1094 564L1094 600 998 629C945 601 893 545 851 515Z" fill="url(#shine)"/>
          </g>
          <path d="M1092 266C1094 264.500 1097 263.700 1099.600 263.700C1151.500 270 1226 381 1243.300 447.800L1139.500 519.800C1125.300 464.700 1080.400 419.700 1035.300 387L794.700 553.800C839.800 586.500 884.700 631.500 898.500 686.800L726.300 806.800C709 740 634.500 629 582.600 622.700" class="edge"/>
          <path d="M948 447C990 480 1045 535 1094 564M998 629C945 601 893 545 851 515" class="edge"/>
          <path d="M1138 563.500L1516 801L1511 800.300C1438 801 1389 891 1398.200 949.300L988 693C977.500 628 1041 562 1118.400 559.500C1127 559.300 1134 561 1138 563.500Z" fill="url(#drill)"/>
          <path d="M1503.400 801.700L1511 800.300C1523 801 1529 810 1530.600 818.700Z" fill="#4d4b60"/>
          <path d="M1138 563.500L1516 801" class="outline"/>
          <path d="M1503.400 801.700L1530.600 818.700C1529 810 1523 801 1511 800.300C1438 801 1389 891 1398.200 949.300L988 693C977.500 628 1041 562 1118.400 559.500C1127 559.300 1134 561 1138 563.500" class="edge"/>
          <g class="vertex">
            <path d="M945 442l1.500 2h3l1.500-2v9l-1.500-1h-3l-1.500 1z"/>
            <path d="M848 510l1.500 2h3l1.500-2v9l-1.500-1h-3l-1.500 1z"/>
            <path d="M1091 559l1.500 2h3l1.500-2v9l-1.500-1h-3l-1.500 1z"/>
            <path d="M994.500 624l1.500 2h3l1.500-2v9l-1.500-1h-3l-1.500 1z"/>
          </g>
          <!-- view triad -->
          <path d="M337 1008l-13-11" stroke="#111" stroke-width="4"/><path d="M318 990l11 4-6 6z" fill="#111"/>
          <path d="M337 1007l-2-9" stroke="#e0502a" stroke-width="3"/><path d="M330 997l4-7 4 7-4 2z" fill="#b00c0c"/>
          <path d="M338 1008l-18 12" stroke="#0b1d9c" stroke-width="3"/><path d="M313 1024l6-9 5 7z" fill="#0b1d9c"/>
          <text x="313" y="987" class="axis axis-y">Y</text><text x="330" y="986" class="axis axis-x">X</text><text x="306" y="1027" class="axis axis-z">Z</text>
        </svg>

        <div class="hud">
          <button class="tool" aria-label="Zoom to fit"><svg><use href="#zoomfit"/></svg></button>
          <button class="tool" aria-label="Zoom to area"><svg><use href="#zoomarea"/></svg></button>
          <button class="tool" aria-label="Previous view"><svg><use href="#prevview"/></svg></button>
          <button class="tool" aria-label="Section view"><svg><use href="#sectionview"/></svg></button>
          <button class="tool" aria-label="Annotation views"><svg><use href="#annview"/></svg></button>
          <button class="tool" aria-label="View orientation"><svg><use href="#orient"/></svg></button>
          <button class="drop faded" aria-label="Orientation options"><svg><use href="#caret"/></svg></button>
          <button class="tool" aria-label="Display style"><svg><use href="#display"/></svg></button>
          <button class="drop faded" aria-label="Display options"><svg><use href="#caret"/></svg></button>
          <button class="tool" aria-label="Hide/show items"><svg><use href="#eye"/></svg></button>
          <button class="drop faded" aria-label="Visibility options"><svg><use href="#caret"/></svg></button>
          <button class="tool" aria-label="Edit appearance"><svg><use href="#appear"/></svg></button>
          <button class="tool" aria-label="Apply scene"><svg><use href="#scene"/></svg></button>
          <button class="drop faded" aria-label="Scene options"><svg><use href="#caret"/></svg></button>
          <button class="tool" aria-label="View settings"><svg><use href="#monitor"/></svg></button>
          <button class="drop faded" aria-label="View setting options"><svg><use href="#caret"/></svg></button>
        </div>
        <div class="doc-buttons">
          <button class="tool" aria-label="Dock left"><svg><use href="#paneleft"/></svg></button>
          <button class="tool" aria-label="Dock right"><svg><use href="#paneright"/></svg></button>
          <button class="tool faded" aria-label="Minimize document"><svg><use href="#min"/></svg></button>
          <button class="tool" aria-label="Restore document"><svg><use href="#cascade"/></svg></button>
          <button class="tool faded" aria-label="Close document"><svg><use href="#close"/></svg></button>
        </div>
        <button class="panel-handle" aria-label="Collapse panel"><i></i></button>
        <div class="taskpane">
          <button class="active" aria-label="Resources"><svg><use href="#home"/></svg></button>
          <button aria-label="Design library"><svg><use href="#library"/></svg></button>
          <button aria-label="File explorer"><svg><use href="#folder"/></svg></button>
          <button aria-label="View palette"><svg><use href="#palette"/></svg></button>
          <button aria-label="Appearances"><svg><use href="#ball"/></svg></button>
          <button aria-label="Custom properties"><svg><use href="#props"/></svg></button>
          <button aria-label="Forum"><svg><use href="#forum"/></svg></button>
          <button aria-label="Part sheet"><svg><use href="#sheet"/></svg></button>
        </div>
      </section>
    </main>

    <nav class="sheet-tabs">
      <div class="sheet-nav">
        <button aria-label="First"><svg viewBox="0 0 14 14"><path d="M3.500 2v10M11 2v10L5 7z" fill="#85858c" stroke="#85858c"/></svg></button>
        <button aria-label="Previous"><svg viewBox="0 0 14 14"><path d="M10 2v10L4 7z" fill="#85858c"/></svg></button>
        <button aria-label="Next"><svg viewBox="0 0 14 14"><path d="M4 2v10l6-5z" fill="#85858c"/></svg></button>
        <button aria-label="Last"><svg viewBox="0 0 14 14"><path d="M10.500 2v10M3 2v10l6-5z" fill="#85858c" stroke="#85858c"/></svg></button>
      </div>
      <button class="sheet active">Model</button><button class="sheet">3D Views</button><button class="sheet last-sheet">Motion Study 1</button>
    </nav>

    <footer class="statusbar">
      <span>SOLIDWORKS Premium 2023 SP3.0</span>
      <div class="status-right">
        <span>Editing Part</span>
        <svg class="icon-sm"><use href="#warn"/></svg>
        <button class="units">MMGS <svg viewBox="0 0 8 8"><path d="M1 5.500h6L4 2.200z" fill="#444"/></svg></button>
        <svg class="icon-sm"><use href="#tag"/></svg>
      </div>
    </footer>
  </body>
</html>
```

FILE: styles.css
```css
* {
  box-sizing: border-box;
}

body {
  display: flex;
  flex-direction: column;
  height: 100vh;
  margin: 0;
  overflow: hidden;
  background-color: #fff;
  color: #000;
  font: 12px/16px Roboto, "Open Sans", sans-serif;
}

button,
input {
  font: inherit;
  color: inherit;
}

button {
  display: flex;
  align-items: center;
  flex: none;
  margin: 0;
  padding: 0;
  border: 0;
  background: none;
  white-space: nowrap;
}

a {
  color: inherit;
  text-decoration: none;
}

svg {
  flex: none;
  width: 20px;
  height: 20px;
}

.sprite {
  position: absolute;
  width: 0;
  height: 0;
}

.icon-sm {
  width: 16px;
  height: 16px;
}

.tool svg {
  display: block;
}

.drop svg {
  width: 8px;
  height: 8px;
}

.faded {
  opacity: 0.5;
}

/* title bar */
.titlebar {
  display: flex;
  flex: none;
  height: 34px;
  background-color: #e5e5e5;
  border-bottom: 1px solid #bfbfbf;
  font-family: "Open Sans", sans-serif;
  font-size: 11px;
}

.menu-zone {
  display: flex;
  align-items: center;
  width: 418px;
  padding-left: 2px;
  background-color: #f7f7f7;
  border-right: 1px solid #bfbfbf;
}

.brand {
  display: flex;
  align-items: center;
  gap: 4px;
  width: 139px;
  color: #cf3a1c;
}

.brand-mark {
  width: 22px;
  height: 22px;
}

.brand-name {
  font: italic 13px/16px Lato, sans-serif;
}

.menus {
  display: flex;
  gap: 16px;
  width: 256px;
}

.quick,
.quick-files,
.quick-last,
.title-right,
.search {
  display: flex;
  align-items: center;
}

.quick {
  padding-left: 21px;
}

.quick-files {
  gap: 8px;
  padding: 0 2px 0 10px;
}

.quick-last {
  gap: 10px;
  padding-left: 5px;
}

.select-tool {
  display: flex;
  height: 30px;
  border: 1px solid #9a9a9a;
}

.select-main {
  padding: 0 5px;
  background-color: #b1b1b1;
}

.select-drop {
  padding: 0 2px;
  border-left: 1px solid #9a9a9a;
}

.select-drop svg {
  width: 8px;
  height: 8px;
}

.doc-title {
  flex: 1;
  margin: 0;
  text-align: center;
  font-size: 11px;
  font-weight: 400;
  line-height: 33px;
}

.title-right {
  gap: 16px;
}

.search {
  width: 202px;
  height: 23px;
  gap: 6px;
  padding: 0 4px 0 6px;
  margin-right: -5px;
  background-color: #fff;
  border: 1px solid #c3c3c3;
}

.search input {
  flex: 1;
  min-width: 0;
  padding: 0;
  border: 0;
  outline: none;
}

.search input::placeholder {
  color: #5c665c;
  opacity: 1;
}

/* ribbon */
.ribbon {
  display: flex;
  flex: none;
  height: 82px;
  background-color: #f7f7f7;
  border-bottom: 1px solid #808080;
  font-family: "Open Sans", sans-serif;
  font-size: 11px;
  line-height: 13px;
}

.group {
  display: flex;
  flex: none;
  margin: 1px 0 2px;
  padding-left: 2px;
  border-right: 1px solid #bfbfbf;
}

.group.last {
  border-right: 0;
}

.group.study {
  flex-direction: column;
  align-items: center;
  justify-content: space-between;
  width: 52px;
  padding: 0 0 7px;
}

.big {
  flex-direction: column;
  padding: 5px 5px 0 4px;
  text-align: center;
}

.big span {
  margin-top: 2px;
}

.big.wide {
  margin: 0 20px;
}

.big:disabled,
.stack button:disabled {
  color: #b4b4b4;
}

.big:disabled svg,
.stack button:disabled svg {
  filter: grayscale(1);
  opacity: 0.35;
}

.stack {
  display: flex;
  flex-direction: column;
  padding: 0 11px 0 0;
}

.stack button {
  gap: 6px;
  height: 26px;
}

.collapse {
  margin: auto 4px 6px auto;
}

.collapse svg {
  width: 12px;
  height: 12px;
}

/* workspace */
.workspace {
  position: relative;
  display: flex;
  flex: 1;
  min-height: 0;
  border-bottom: 1px solid #808080;
}

.command-tabs {
  position: absolute;
  z-index: 2;
  top: 0;
  left: 0;
  display: flex;
  height: 22px;
}

.command-tabs button {
  padding: 0 7px;
  background-color: #d4d4d4;
  border-right: 1px solid #808080;
  border-bottom: 1px solid #808080;
  color: #333;
}

.command-tabs .active {
  background-color: #f9f9f9;
  border-bottom-color: #f9f9f9;
  font-weight: 700;
}

.manager {
  display: flex;
  flex-direction: column;
  flex: none;
  width: 297px;
  padding: 26px 2px 6px 0;
  background-color: #f7f7f7;
  border-right: 1px solid #808080;
}

.grip {
  display: flex;
  align-items: center;
  justify-content: center;
  flex: none;
  height: 16px;
  margin-bottom: 4px;
  border: 1px solid #c0c0c0;
  border-width: 1px 0;
}

.grip i,
.panel-handle i {
  width: 6px;
  height: 6px;
  background-color: #ccc;
  border: 1px solid #999;
  border-radius: 50%;
}

.manager-tabs {
  display: flex;
  flex: none;
  height: 26px;
  border-bottom: 1px solid #b0b0b0;
}

.manager-tabs button {
  justify-content: center;
  width: 40px;
  background-color: #d4d4d4;
  border: 1px solid #808080;
  border-left: 0;
}

.manager-tabs .active {
  background-color: #f7f7f7;
  border-bottom-color: #f7f7f7;
}

.manager-tabs .more {
  width: 20px;
  margin-left: auto;
  background: none;
  border: 0;
}

.manager-tabs .more svg {
  width: 14px;
  height: 14px;
}

.filter {
  display: flex;
  align-items: center;
  flex: none;
  height: 26px;
  margin: 0 4px 1px 3px;
  padding-left: 1px;
  border: 1px solid #c0c0c0;
}

.filter input {
  flex: 1;
  border: 0;
  outline: none;
  background: none;
}

.tree-wrap {
  display: flex;
  flex: 1;
  min-height: 0;
}

.tree {
  flex: 1;
  min-width: 0;
  margin: 0;
  padding: 0;
  overflow: hidden;
  list-style: none;
}

.tree li {
  display: flex;
  align-items: center;
  gap: 4px;
  height: 22px;
  padding-left: 24px;
  white-space: nowrap;
}

.tree .root {
  padding-left: 1px;
}

.tree .open {
  padding-left: 7px;
}

.tree .open::before {
  content: "";
  box-sizing: border-box;
  width: 5px;
  margin-right: 8px;
  border: 4px solid transparent;
  border-left: 5px solid #666;
  border-right: 0;
}

.tree .rollback {
  box-shadow: 0 1px #2b8dc8, inset 0 -2px #2b8dc8;
}

.tree .off {
  color: #8c8c8c;
}

.tree .off svg {
  filter: grayscale(1);
  opacity: 0.4;
}

.tiny {
  font: 700 9px "Open Sans", sans-serif;
  fill: #222;
}

.vscroll {
  display: flex;
  flex-direction: column;
  width: 15px;
  background-color: #f0f0f0;
}

.vscroll svg,
.hscroll svg {
  width: 15px;
  height: 15px;
}

.vtrack,
.htrack {
  flex: 1;
}

.vthumb {
  height: 62%;
  background-color: #cdcdcd;
}

.hscroll {
  display: flex;
  flex: none;
  height: 15px;
  margin-right: 16px;
  background-color: #f0f0f0;
}

.hthumb {
  width: 85%;
  height: 100%;
  background-color: #cdcdcd;
}

/* graphics area */
.viewport {
  position: relative;
  flex: 1;
  min-width: 0;
  background-color: #fff;
}

.model {
  position: absolute;
  inset: 0;
  width: 100%;
  height: 100%;
}

.edge {
  fill: none;
  stroke: #2089c4;
  stroke-width: 1.2;
}

.silhouette {
  fill: none;
  stroke: #444;
}

.outline {
  fill: none;
  stroke: #000;
  stroke-width: 1.5;
}

.vertex {
  fill: #d60f14;
  stroke: #d60f14;
  stroke-width: 1;
}

.axis {
  font: 9px "Open Sans", sans-serif;
}

.axis-x {
  fill: #e0502a;
}

.axis-y {
  fill: #444a2c;
}

.axis-z {
  fill: #2038b4;
}

.hud {
  position: relative;
  display: flex;
  align-items: center;
  justify-content: center;
  gap: 6px;
  padding-top: 5px;
}

.doc-buttons {
  position: absolute;
  top: 5px;
  right: 4px;
  display: flex;
  gap: 6px;
}

.panel-handle {
  position: absolute;
  top: 48%;
  left: 0;
  width: 8px;
  height: 39px;
  background-color: #f7f7f7;
  border: 1px solid #808080;
  border-left: 0;
}

.taskpane {
  position: absolute;
  top: 75px;
  right: 0;
  width: 21px;
  overflow: hidden;
  border: 1px solid #808080;
  border-width: 1px 0 0 1px;
}

.taskpane button {
  width: 24px;
  height: 24px;
  padding-left: 2px;
  background-color: #d4d4d4;
  border-bottom: 1px solid #808080;
}

.taskpane .active {
  background-color: #f7f7f7;
}

/* bottom bars */
.sheet-tabs {
  display: flex;
  flex: none;
  height: 15px;
  padding-left: 25px;
  background-color: #f7f7f7;
  border-bottom: 1px solid #808080;
  line-height: 14px;
}

.sheet-nav {
  display: flex;
  border-right: 1px solid #666;
}

.sheet-nav button {
  justify-content: center;
  width: 16px;
  background-color: #b4b4b4;
  border: 1px solid #888;
  border-width: 1px 1px 0 0;
}

.sheet-nav svg {
  width: 12px;
  height: 12px;
}

.sheet {
  padding: 0 8px;
  background-color: #d4d4d4;
  border-right: 1px solid #808080;
  color: #333;
}

.sheet.active {
  padding: 0 12px;
  background-color: #fff;
  color: #000;
  font-weight: 700;
}

.sheet.last-sheet {
  padding-right: 18px;
}

.statusbar {
  display: flex;
  flex: none;
  justify-content: space-between;
  height: 16px;
  overflow: hidden;
  background-color: #e5e5e5;
  line-height: 18px;
}

.status-right {
  display: flex;
  align-items: center;
  gap: 28px;
  padding-right: 18px;
}

.units {
  gap: 12px;
  margin-left: 47px;
}

.units svg {
  width: 8px;
  height: 8px;
}
```
